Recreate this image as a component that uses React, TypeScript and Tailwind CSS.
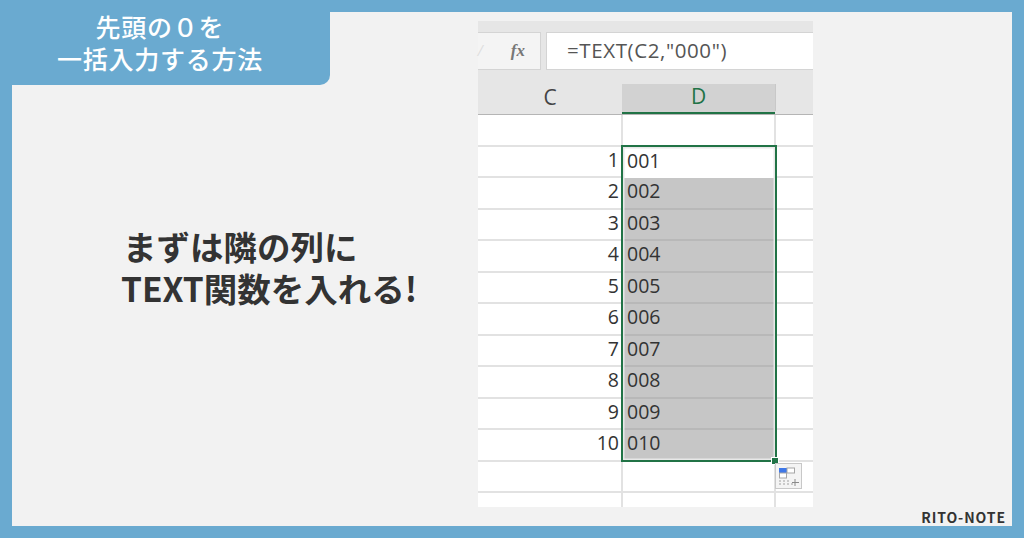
const rows = ["001", "002", "003", "004", "005", "006", "007", "008", "009", "010"];

const jp = "font-['Noto_Sans_CJK_JP','Noto_Sans',sans-serif]";

function FillOptions() {
  return (
    <svg width="27" height="26" viewBox="0 0 27 26" className="block">
      <rect x="0.5" y="0.5" width="26" height="25" fill="#f4f4f4" stroke="#c8c8c8" />
      <rect x="4" y="5" width="8" height="5" fill="#3f78e8" />
      <rect x="12" y="5" width="7.5" height="5" fill="#fff" stroke="#a6a6a6" />
      <rect x="4.5" y="10" width="7" height="5" fill="#fff" stroke="#a6a6a6" />
      <path d="M4 18h2M8 18h2M12 18h2M4 21h2M8 21h2M12 21h2M16 21h2" stroke="#a0a0a0" />
      <path d="M20 16v7M17 19.5h7" stroke="#8a8a8a" />
    </svg>
  );
}

function Sheet() {
  return (
    <div className="relative flex h-[486px] w-[335px] flex-col bg-white font-['Open_Sans',sans-serif]">
      <div className="flex h-[63px] items-start gap-[5px] bg-[#e6e6e6] pt-[11px]">
        <div className="flex h-[38px] w-[63px] items-center justify-between border border-l-0 border-[#d4d4d4] bg-[#f4f4f4] pr-[15px] font-['Liberation_Serif',serif] text-[17px] font-bold text-[#777] italic">
          <span className="text-[#dedede]">/</span>
          <span>fx</span>
        </div>
        <div className="flex h-[38px] flex-1 items-center border border-r-0 border-[#d4d4d4] bg-white pb-[2px] pl-[20px] text-[20.5px] tracking-[0.6px] text-[#555]">
          =TEXT(C2,"000")
        </div>
      </div>
      <div className="flex h-[31px] border-b border-[#b5b5b5] bg-[#e6e6e6] pb-[3px] text-[21px]">
        <div className="flex w-[144px] items-center justify-center text-[#444]">C</div>
        <div className="-mb-[3px] flex w-[153px] items-center justify-center border-b-2 border-[#217346] bg-[#d2d2d2] pb-[3px] text-[#217346]">
          D
        </div>
        <div className="flex-1 border-l border-[#c8c8c8]" />
      </div>
      <div className="flex h-[31.5px] border-b-2 border-[#e2e2e2]">
        <div className="w-[145px] border-r-2 border-[#e2e2e2]" />
        <div className="w-[153px] border-r-2 border-[#e2e2e2]" />
      </div>
      {rows.map((value, i) => (
        <div key={value} className="flex h-[31.5px] border-b-2 border-[#e2e2e2] text-[19.5px] text-[#333]">
          <div className="flex w-[145px] items-center justify-end border-r-2 border-[#e2e2e2] pr-[2px] pb-[4px]">
            {i + 1}
          </div>
          <div
            className={`-mb-[2px] flex w-[153px] items-center border-r-2 border-[#e2e2e2] pb-[4px] pl-[4px] ${
              i === 0 ? "bg-white" : "border-b-2 border-b-[#b8b8b8] bg-[#c6c6c6]"
            }`}
          >
            {value}
          </div>
        </div>
      ))}
      <div className="flex h-[31.5px] border-b-2 border-[#e2e2e2]">
        <div className="w-[145px] border-r-2 border-[#e2e2e2]" />
        <div className="w-[153px] border-r-2 border-[#e2e2e2]" />
      </div>
      <div className="flex flex-1">
        <div className="w-[145px] border-r-2 border-[#e2e2e2]" />
        <div className="w-[153px] border-r-2 border-[#e2e2e2]" />
      </div>
      {/* selection frame, fill handle and paste options sit over the cells */}
      <div className="absolute top-[124px] left-[143px] h-[317px] w-[156px] border-[2.5px] border-[#217346] shadow-[inset_0_0_0_1.5px_#e8e8e8]" />
      <div className="absolute top-[436px] left-[293px] h-[8px] w-[8px] border border-white bg-[#217346]" />
      <div className="absolute top-[442px] left-[297px]">
        <FillOptions />
      </div>
    </div>
  );
}

export default function App() {
  return (
    <div className={`h-[538px] w-[1024px] overflow-hidden bg-[#6aaad0] p-[12px] ${jp}`}>
      <div className="relative flex h-[514px] w-[1000px] bg-[#f2f2f2]">
        <div className="absolute -top-[12px] -left-[12px] flex h-[85px] w-[330px] flex-col items-center justify-center gap-[1px] rounded-br-[10px] bg-[#6aaad0] pr-[10px] text-[25px] leading-[31px] font-medium tracking-[0.75px] text-white">
          <p>先頭の０を</p>
          <p>一括入力する方法</p>
        </div>
        <div className="flex w-[466px] shrink-0 flex-col pt-[213px] pl-[109px] text-[33.5px] leading-[42px] font-bold whitespace-nowrap text-[#333]">
          <p className="pl-[2px]">まずは隣の列に</p>
          <p>TEXT関数を入れる!</p>
        </div>
        <div className="pt-[9px]">
          <Sheet />
        </div>
        <div className="absolute right-[6px] -bottom-[1px] text-[14px] leading-[20px] font-bold tracking-[0.9px] text-[#333]">
          RITO-NOTE
        </div>
      </div>
    </div>
  );
}
